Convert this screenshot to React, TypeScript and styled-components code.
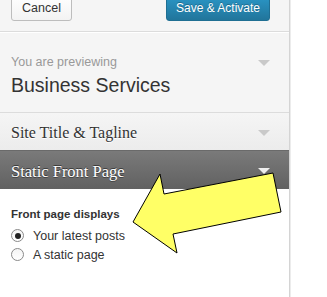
import * as React from 'react'
import styled, { createGlobalStyle } from 'styled-components';

const GlobalStyle = createGlobalStyle`
    html, body {
        margin: 0;
        padding: 0;
        background: #fff;
        font-family: "Liberation Sans", Arial, sans-serif;
    }
`

const Page = styled.div`
    position: relative;
    width: 327px;
    height: 297px;
    overflow: hidden;
    background: #fff;
`

const Sidebar = styled.div`
    width: 289px;
    height: 297px;
    background: #fff;
    border-right: 1px solid #d4d4d4;
    box-shadow: 1px 0 0 #ececec;
    display: flex;
    flex-direction: column;
`

const Header = styled.div`
    box-sizing: border-box;
    height: 32px;
    display: flex;
    justify-content: space-between;
    align-items: flex-end;
    padding: 0 19px 10px 11px;
    background: #f5f5f5;
    border-bottom: 1px solid #dcdcdc;
`

const Button = styled.button<{ $primary?: boolean }>`
    box-sizing: border-box;
    height: 25px;
    flex-shrink: 0;
    border-radius: 3px;
    font-family: "Liberation Sans", Arial, sans-serif;
    line-height: 23px;
    padding: 0;
    cursor: pointer;
    width: ${p => (p.$primary ? '104px' : '61px')};
    font-size: ${p => (p.$primary ? '12px' : '12.5px')};
    color: ${p => (p.$primary ? '#fff' : '#333')};
    border: 1px solid ${p => (p.$primary ? '#1f6f93' : '#bdbdbd')};
    background: ${p => (p.$primary
        ? 'linear-gradient(#2a95c5, #21759b)'
        : 'linear-gradient(#fefefe, #f3f3f3)')};
    box-shadow: ${p => (p.$primary ? 'inset 0 1px 0 rgba(120,200,230,0.5)' : 'inset 0 1px 0 #fff')};
    text-shadow: ${p => (p.$primary ? '0 -1px 0 rgba(0,0,0,0.25)' : 'none')};
`

const Preview = styled.div`
    padding: 21px 19px 15px 11px;
    background: #f5f5f5;
    border-top: 1px solid #fff;
    border-bottom: 1px solid #dcdcdc;
`

const PreviewRow = styled.div`
    display: flex;
    justify-content: space-between;
    align-items: center;
`

const PreviewLabel = styled.div`
    font-size: 12.5px;
    line-height: 16px;
    color: #999;
`

const ThemeName = styled.div`
    margin-top: 3px;
    font-size: 19.5px;
    line-height: 24px;
    color: #333;
`

const SectionTitle = styled.div<{ $open?: boolean }>`
    box-sizing: border-box;
    height: ${p => (p.$open ? '39px' : '37px')};
    display: flex;
    justify-content: space-between;
    align-items: flex-start;
    padding: ${p => (p.$open ? '10.5px' : '10px')} 19px 0 11px;
    font-family: "Liberation Serif", Georgia, serif;
    font-size: ${p => (p.$open ? '16.5px' : '16px')};
    line-height: 20px;
    color: ${p => (p.$open ? '#fff' : '#333')};
    text-shadow: ${p => (p.$open ? '0 -1px 0 #3a3a3a, 0 1px 0 #444' : '0 1px 0 #fff')};
    background: ${p => (p.$open
        ? 'linear-gradient(#7a7a7a, #616161)'
        : 'linear-gradient(#f5f5f5, #ececec)')};
    border-top: ${p => (p.$open ? '1px solid #6a6a6a' : 'none')};
`

const Caret = styled.span<{ $light?: boolean; $offset?: number }>`
    width: 0;
    height: 0;
    margin-top: ${p => p.$offset || 0}px;
    border-left: 6px solid transparent;
    border-right: 6px solid transparent;
    border-top: 6px solid ${p => (p.$light ? '#eeeeee' : '#c9c9c9')};
`

const Content = styled.div`
    flex: 1;
    padding: 17px 19px 0 11px;
    background: #fff;
`

const FieldTitle = styled.div`
    font-size: 11.5px;
    font-weight: bold;
    line-height: 16px;
    color: #333;
    margin-bottom: 4px;
`

const RadioRow = styled.label`
    display: flex;
    align-items: center;
    gap: 9px;
    height: 19px;
    font-size: 12.5px;
    color: #333;
`

const RadioDot = styled.span<{ $checked?: boolean }>`
    box-sizing: border-box;
    width: 13px;
    height: 13px;
    border-radius: 50%;
    border: 1px solid #8a8a8a;
    background: linear-gradient(#f4f4f4, #fff);
    display: flex;
    align-items: center;
    justify-content: center;
    &::after {
        content: '';
        display: ${p => (p.$checked ? 'block' : 'none')};
        width: 6px;
        height: 6px;
        border-radius: 50%;
        background: #222;
    }
`

const Arrow = styled.svg`
    position: absolute;
    left: 0;
    top: 0;
    pointer-events: none;
`

export default function App() {
    return (
        <Page>
            <GlobalStyle />
            <Sidebar>
                <Header>
                    <Button>Cancel</Button>
                    <Button $primary>Save &amp; Activate</Button>
                </Header>
                <Preview>
                    <PreviewRow>
                        <PreviewLabel>You are previewing</PreviewLabel>
                        <Caret $offset={2} />
                    </PreviewRow>
                    <ThemeName>Business Services</ThemeName>
                </Preview>
                <SectionTitle>
                    Site Title &amp; Tagline
                    <Caret $offset={7} />
                </SectionTitle>
                <SectionTitle $open>
                    Static Front Page
                    <Caret $light $offset={6} />
                </SectionTitle>
                <Content>
                    <FieldTitle>Front page displays</FieldTitle>
                    <RadioRow><RadioDot $checked />Your latest posts</RadioRow>
                    <RadioRow><RadioDot />A static page</RadioRow>
                </Content>
            </Sidebar>
            {/* callout arrow pasted over the screenshot */}
            <Arrow width="327" height="297" viewBox="0 0 327 297">
                <polygon
                    points="160,174 164,194 273,173 281,212 173,234 177,253 133,222"
                    fill="#ffff66"
                    stroke="#000"
                    strokeWidth="1"
                    strokeLinejoin="miter"
                />
            </Arrow>
        </Page>
    )
}
